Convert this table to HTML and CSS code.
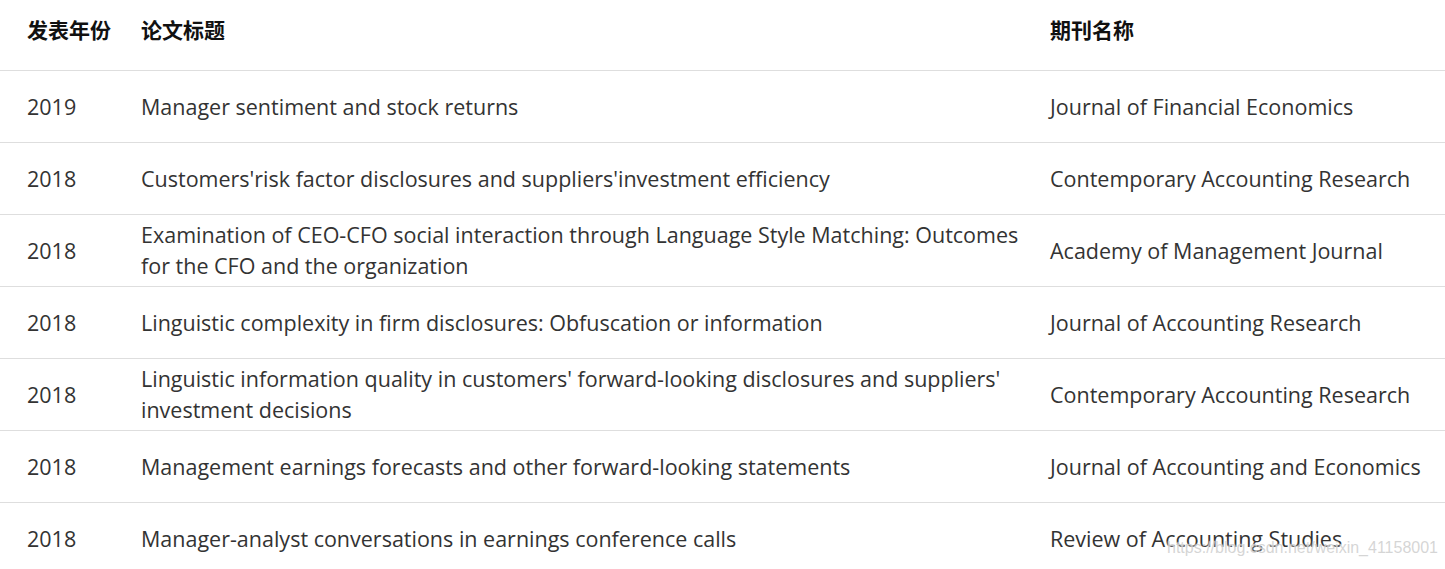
FILE: index.html
```html
<!DOCTYPE html>
<html lang="zh">
<head>
<meta charset="utf-8">
<title>论文列表</title>
<link rel="stylesheet" href="styles.css">
</head>
<body>
<div class="page">
  <table class="papers">
    <colgroup>
      <col class="c-year">
      <col class="c-title">
      <col class="c-journal">
    </colgroup>
    <thead>
      <tr>
        <th class="year">发表年份</th>
        <th>论文标题</th>
        <th>期刊名称</th>
      </tr>
    </thead>
    <tbody>
      <tr><td class="year">2019</td><td>Manager sentiment and stock returns</td><td>Journal of Financial Economics</td></tr>
      <tr><td class="year">2018</td><td>Customers'risk factor disclosures and suppliers'investment efficiency</td><td>Contemporary Accounting Research</td></tr>
      <tr><td class="year">2018</td><td>Examination of CEO-CFO social interaction through Language Style Matching: Outcomes for the CFO and the organization</td><td>Academy of Management Journal</td></tr>
      <tr><td class="year">2018</td><td>Linguistic complexity in firm disclosures: Obfuscation or information</td><td>Journal of Accounting Research</td></tr>
      <tr><td class="year">2018</td><td>Linguistic information quality in customers' forward-looking disclosures and suppliers' investment decisions</td><td>Contemporary Accounting Research</td></tr>
      <tr><td class="year">2018</td><td>Management earnings forecasts and other forward-looking statements</td><td>Journal of Accounting and Economics</td></tr>
      <tr><td class="year">2018</td><td>Manager-analyst conversations in earnings conference calls</td><td>Review of Accounting Studies</td></tr>
    </tbody>
  </table>
  <div class="watermark">https://blog.csdn.net/weixin_41158001</div>
</div>
</body>
</html>
```

FILE: styles.css
```css
html, body {
  margin: 0;
  padding: 0;
  background: #ffffff;
}

.page {
  position: relative;
  width: 1445px;
  height: 569px;
  overflow: hidden;
}

.papers {
  border-collapse: collapse;
  table-layout: fixed;
  width: 1445px;
  font-family: "Open Sans", "Noto Sans CJK SC", sans-serif;
  font-size: 21.5px;
  color: #333333;
}

.c-year { width: 123px; }
.c-title { width: 909px; }
.c-journal { width: 413px; }

.papers th {
  height: 70px;
  padding: 0 0 12px 18px;
  text-align: left;
  vertical-align: middle;
  font-family: "Noto Sans CJK SC", sans-serif;
  font-size: 21px;
  font-weight: 700;
  color: #111111;
  border-bottom: 1px solid #dedede;
  box-sizing: border-box;
}

.papers td {
  height: 71px;
  padding: 0 0 0 18px;
  vertical-align: middle;
  line-height: 31px;
  border-bottom: 1px solid #dedede;
  white-space: normal;
}

.papers tbody tr:last-child td {
  border-bottom: none;
}

.papers .year {
  padding-left: 27px;
}

.watermark {
  position: absolute;
  left: 1167px;
  top: 539px;
  font-family: "Liberation Sans", Arial, sans-serif;
  font-size: 16px;
  color: rgba(200, 200, 200, 0.75);
  text-shadow: 0 0 2px #ffffff;
  white-space: nowrap;
}
```
